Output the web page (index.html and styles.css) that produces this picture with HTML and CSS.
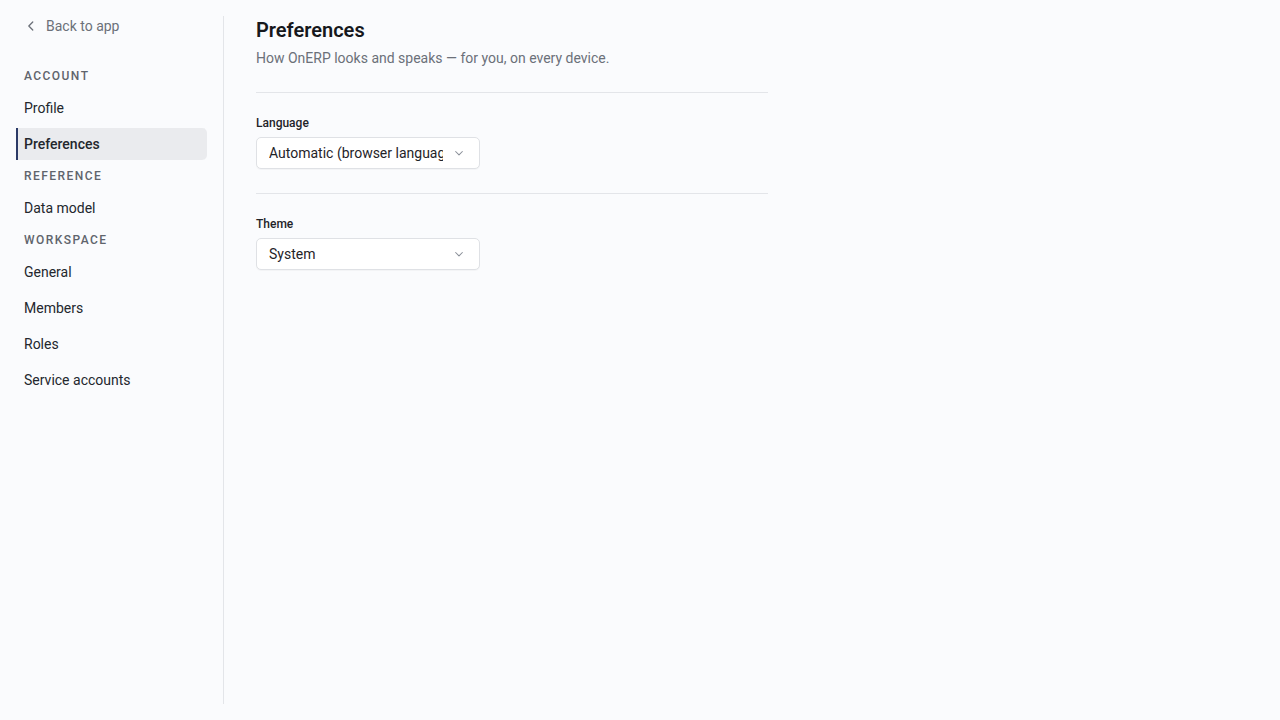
FILE: index.html
```html
<!DOCTYPE html>
<html>
<head>
  <meta charset="utf-8">
  <title>Preferences - OnERP</title>
  <link rel="stylesheet" href="styles.css">
</head>
<body>
  <div class="layout">
    <aside class="sidebar">
      <a class="back" href="#">
        <svg class="back-icon" width="14" height="14" viewBox="0 0 16 16" fill="none" stroke="currentColor" stroke-width="1.5" stroke-linecap="round" stroke-linejoin="round"><path d="M10 3.5 5.5 8l4.5 4.5"/></svg>
        Back to app
      </a>
      <nav class="nav">
        <div class="nav-label">Account</div>
        <a class="nav-item" href="#">Profile</a>
        <a class="nav-item active" href="#">Preferences</a>
        <div class="nav-label">Reference</div>
        <a class="nav-item" href="#">Data model</a>
        <div class="nav-label">Workspace</div>
        <a class="nav-item" href="#">General</a>
        <a class="nav-item" href="#">Members</a>
        <a class="nav-item" href="#">Roles</a>
        <a class="nav-item" href="#">Service accounts</a>
      </nav>
    </aside>
    <main class="content">
      <header class="page-head">
        <h1 class="title">Preferences</h1>
        <p class="subtitle">How OnERP looks and speaks — for you, on every device.</p>
      </header>
      <section class="field">
        <label class="field-label">Language</label>
        <div class="select">
          <span class="select-value">Automatic (browser language)</span>
          <svg class="chevron" width="12" height="12" viewBox="0 0 16 16" fill="none" stroke="currentColor" stroke-width="1.4" stroke-linecap="round" stroke-linejoin="round"><path d="M3.5 6 8 10.5 12.5 6"/></svg>
        </div>
      </section>
      <section class="field">
        <label class="field-label">Theme</label>
        <div class="select">
          <span class="select-value">System</span>
          <svg class="chevron" width="12" height="12" viewBox="0 0 16 16" fill="none" stroke="currentColor" stroke-width="1.4" stroke-linecap="round" stroke-linejoin="round"><path d="M3.5 6 8 10.5 12.5 6"/></svg>
        </div>
      </section>
    </main>
  </div>
</body>
</html>
```

FILE: styles.css
```css
html, body {
  margin: 0;
  height: 100%;
}
body {
  font-family: Roboto, "Liberation Sans", sans-serif;
  font-size: 14px;
  color: #1f2328;
  background: #fafbfd;
}
a {
  color: inherit;
  text-decoration: none;
}

.layout {
  display: flex;
  height: 100%;
  box-sizing: border-box;
  padding: 16px 0;
}

.sidebar {
  width: 224px;
  box-sizing: border-box;
  border-right: 1px solid #e3e5e9;
  padding: 0 16px;
  display: flex;
  flex-direction: column;
}
.back {
  display: flex;
  align-items: center;
  gap: 8px;
  height: 20px;
  padding-left: 8px;
  color: #6b7079;
  font-size: 14px;
}
.nav {
  display: flex;
  flex-direction: column;
  gap: 4px;
  margin-top: 28px;
}
.nav-label {
  height: 24px;
  line-height: 24px;
  padding-left: 8px;
  font-size: 12px;
  font-weight: 500;
  letter-spacing: 0.12em;
  text-transform: uppercase;
  color: #5f646c;
}
.nav-item {
  height: 32px;
  line-height: 32px;
  padding-left: 8px;
  border-radius: 5px;
  color: #23272d;
}
.nav-item.active {
  background: #eaebee;
  font-weight: 500;
  border-radius: 0 5px 5px 0;
  box-shadow: inset 2px 0 0 #2b3a67;
}

.content {
  padding: 0 32px;
  width: 512px;
}
.page-head {
  padding-bottom: 24px;
  border-bottom: 1px solid #e3e5e9;
}
.title {
  margin: 0;
  font-size: 20px;
  line-height: 28px;
  font-weight: 600;
  color: #16181c;
}
.subtitle {
  margin: 4px 0 0;
  line-height: 20px;
  color: #6b7079;
}
.field {
  display: flex;
  flex-direction: column;
  gap: 5px;
  padding: 21px 0 24px;
  border-bottom: 1px solid #e3e5e9;
}
.field:last-child {
  border-bottom: none;
}
.field-label {
  font-size: 12px;
  line-height: 18px;
  font-weight: 500;
  color: #1f2328;
}
.select {
  display: flex;
  align-items: center;
  width: 224px;
  height: 32px;
  box-sizing: border-box;
  padding: 0 14px 0 12px;
  background: #fff;
  border: 1px solid #dfe1e5;
  border-radius: 5px;
  box-shadow: 0 1px 1px rgba(0, 0, 0, 0.03);
}
.select-value {
  flex: 1;
  overflow: hidden;
  white-space: nowrap;
  color: #1f2328;
  margin-right: 10px;
}
.chevron {
  color: #8a8f98;
  flex: none;
}
```
